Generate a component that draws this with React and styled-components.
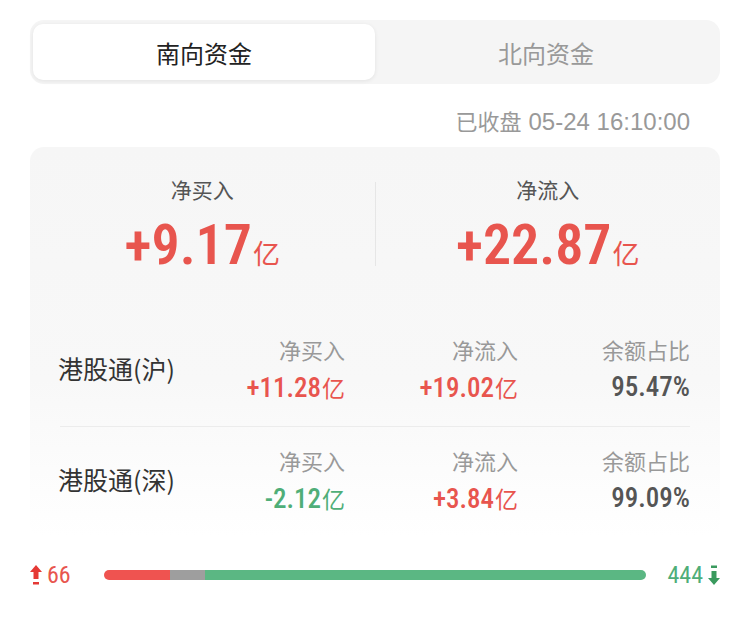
import React from 'react';
import styled, { createGlobalStyle } from 'styled-components';

const GlobalStyle = createGlobalStyle`
	body {
		margin: 0;
		background: #fff;
		font-family: 'Noto Sans CJK SC', 'Noto Sans', sans-serif;
	}
`;

const RED = '#e8554e';
const GREEN = '#4fae78';
const NUM_FONT = `Roboto, 'Noto Sans CJK SC', sans-serif`;

const Page = styled.div`
	width: 750px;
	padding: 20px 30px 0;
	box-sizing: border-box;
`;

const Tabs = styled.div`
	display: flex;
	height: 64px;
	padding: 4px 3px;
	box-sizing: border-box;
	background: #f5f5f5;
	border-radius: 14px;
`;

const Tab = styled.div`
	flex: 1;
	display: flex;
	align-items: center;
	justify-content: center;
	border-radius: 10px;
	font-size: 24px;
	color: ${(p) => (p.active ? '#222' : '#999')};
	background: ${(p) => (p.active ? '#fff' : 'transparent')};
	box-shadow: ${(p) => (p.active ? '0 1px 4px rgba(0,0,0,0.08)' : 'none')};
`;

const Stamp = styled.div`
	margin: 24px 30px 13px 0;
	text-align: right;
	font-size: 22px;
	line-height: 24px;
	color: #999;
`;

const StampTime = styled.span`
	font-family: 'Liberation Sans', 'Noto Sans CJK SC', sans-serif;
	font-size: 24px;
	margin-left: 7px;
`;

const Card = styled.div`
	border-radius: 14px;
	background: linear-gradient(#f6f6f6 0%, #f8f8f8 60%, #fff 100%);
`;

const Summary = styled.div`
	display: flex;
	align-items: center;
	padding: 28px 0 43px;
`;

const SummaryCol = styled.div`
	flex: 1;
	display: flex;
	flex-direction: column;
	align-items: center;
`;

const VDivider = styled.div`
	width: 1px;
	height: 84px;
	background: #e6e6e6;
`;

const SummaryLabel = styled.div`
	font-size: 21px;
	line-height: 28px;
	color: #555;
`;

const BigValue = styled.div`
	margin-top: 14px;
	height: 56px;
	display: flex;
	align-items: baseline;
	color: ${(p) => p.color};
	font-family: ${NUM_FONT};
	font-stretch: condensed;
	font-weight: 600;
	font-size: 56px;
	line-height: 56px;
`;

const Unit = styled.span`
	font-family: 'Noto Sans CJK SC', sans-serif;
	font-weight: 400;
	font-size: ${(p) => p.size || 27}px;
	margin-left: 1px;
`;

const RowList = styled.div`
	padding: 0 30px;
`;

const Row = styled.div`
	display: grid;
	grid-template-columns: 170px 115px 173px 1fr;
	grid-template-rows: 28px 28px;
	row-gap: 10px;
	padding: 19px 0 25px;
	border-bottom: ${(p) => (p.last ? 'none' : '1px solid #ececec')};
`;

const RowName = styled.div`
	grid-row: 1 / span 2;
	align-self: center;
	margin-left: -2px;
	font-size: 25px;
	color: #333;
`;

const ColHead = styled.div`
	text-align: right;
	font-size: 22px;
	line-height: 28px;
	color: #999;
`;

const ColValue = styled.div`
	text-align: right;
	font-family: ${NUM_FONT};
	font-stretch: condensed;
	font-size: 27px;
	font-weight: 500;
	line-height: 28px;
	color: ${(p) => p.color};
`;

const BarRow = styled.div`
	display: grid;
	grid-template-columns: 74px 1fr 74px;
	align-items: center;
	margin-top: 24px;
	height: 24px;
`;

const Count = styled.div`
	display: flex;
	align-items: center;
	justify-content: ${(p) => (p.right ? 'flex-end' : 'flex-start')};
	gap: 5px;
	font-family: ${NUM_FONT};
	font-stretch: condensed;
	font-size: 24px;
	color: ${(p) => p.color};
`;

const Bar = styled.div`
	display: flex;
	height: 10px;
	border-radius: 5px;
	overflow: hidden;
`;

const Seg = styled.div`
	background: ${(p) => p.color};
`;

const UpArrow = () => (
	<svg width="12" height="20" viewBox="0 0 12 20">
		<path d="M6 0 L12 7 L8.5 7 L8.5 14 L3.5 14 L3.5 7 L0 7 Z" fill="#e53935" />
		<rect x="3" y="17" width="6" height="2.5" fill="#e53935" />
	</svg>
);

const DownArrow = () => (
	<svg width="12" height="20" viewBox="0 0 12 20">
		<rect x="3" y="0.5" width="6" height="2.5" fill="#3a9a5e" />
		<path d="M3.5 6 L8.5 6 L8.5 13 L12 13 L6 20 L0 13 L3.5 13 Z" fill="#3a9a5e" />
	</svg>
);

const rows = [
	{ name: '港股通(沪)', buy: '+11.28', buyColor: RED, flow: '+19.02', flowColor: RED, ratio: '95.47%' },
	{ name: '港股通(深)', buy: '-2.12', buyColor: GREEN, flow: '+3.84', flowColor: RED, ratio: '99.09%' },
];

const App = () => {
	const up = 66;
	const flat = 36;
	const down = 444;
	const total = up + flat + down;
	return (
		<Page>
			<GlobalStyle />
			<Tabs>
				<Tab active>南向资金</Tab>
				<Tab>北向资金</Tab>
			</Tabs>
			<Stamp>
				已收盘<StampTime>05-24 16:10:00</StampTime>
			</Stamp>
			<Card>
				<Summary>
					<SummaryCol>
						<SummaryLabel>净买入</SummaryLabel>
						<BigValue color={RED}>
							+9.17<Unit>亿</Unit>
						</BigValue>
					</SummaryCol>
					<VDivider />
					<SummaryCol>
						<SummaryLabel>净流入</SummaryLabel>
						<BigValue color={RED}>
							+22.87<Unit>亿</Unit>
						</BigValue>
					</SummaryCol>
				</Summary>
				<RowList>
					{rows.map((r, i) => (
						<Row key={r.name} last={i === rows.length - 1}>
							<RowName>{r.name}</RowName>
							<ColHead>净买入</ColHead>
							<ColHead>净流入</ColHead>
							<ColHead>余额占比</ColHead>
							<ColValue color={r.buyColor}>
								{r.buy}
								<Unit size={23}>亿</Unit>
							</ColValue>
							<ColValue color={r.flowColor}>
								{r.flow}
								<Unit size={23}>亿</Unit>
							</ColValue>
							<ColValue color="#555">{r.ratio}</ColValue>
						</Row>
					))}
				</RowList>
			</Card>
			<BarRow>
				<Count color={RED}>
					<UpArrow />
					{up}
				</Count>
				<Bar>
					<Seg color="#ef5350" style={{ width: `${(up / total) * 100}%` }} />
					<Seg color="#9e9e9e" style={{ width: `${(flat / total) * 100}%` }} />
					<Seg color="#5bb783" style={{ flex: 1 }} />
				</Bar>
				<Count color={GREEN} right>
					{down}
					<DownArrow />
				</Count>
			</BarRow>
		</Page>
	);
};

export default App;
